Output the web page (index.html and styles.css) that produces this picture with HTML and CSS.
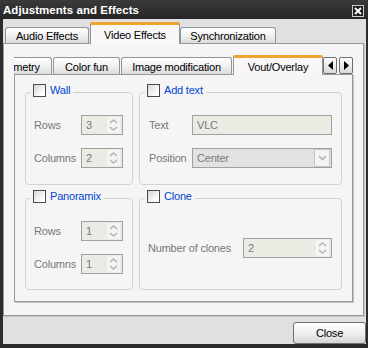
FILE: index.html
```html
<!DOCTYPE html>
<html>
<head>
<meta charset="utf-8">
<link rel="stylesheet" href="styles.css">
</head>
<body>
<div class="window">
  <div class="titlebar">
    <span class="title">Adjustments and Effects</span>
    <span class="xbtn"><svg width="8" height="8" viewBox="0 0 8 8"><path d="M1 1 L7 7 M7 1 L1 7" stroke="#fff" stroke-width="2"/></svg></span>
  </div>
  <div class="client">
    <div class="tabbar outer-bar">
      <div class="tab w-audio">Audio Effects</div>
      <div class="tab active w-video">Video Effects</div>
      <div class="tab w-sync">Synchronization</div>
    </div>
    <div class="pane outer-pane">
      <div class="inner-bar">
        <div class="strip">
          <div class="tab itab w-geo">Geometry</div>
          <div class="tab itab w-color">Color fun</div>
          <div class="tab itab w-image">Image modification</div>
          <div class="tab itab active w-vout">Vout/Overlay</div>
        </div>
        <div class="scrollers">
          <div class="sbtn"><svg width="5" height="9" viewBox="0 0 5 9"><path d="M5 0 L0 4.5 L5 9 Z" fill="#000"/></svg></div>
          <div class="sbtn"><svg width="5" height="9" viewBox="0 0 5 9"><path d="M0 0 L5 4.5 L0 9 Z" fill="#000"/></svg></div>
        </div>
      </div>
      <div class="pane inner-pane">
        <div class="groups">
          <div class="group">
            <div class="gtitle"><span class="cb"></span><span class="gname">Wall</span></div>
            <div class="gbody form narrow">
              <span class="lbl">Rows</span>
              <div class="spin"><span class="val">3</span><span class="arrows"><svg width="9" height="5" viewBox="0 0 9 5"><path d="M1 4 L4.5 1 L8 4" stroke="#b4b4b4" stroke-width="1.5" fill="none"/></svg><svg width="9" height="5" viewBox="0 0 9 5"><path d="M1 1 L4.5 4 L8 1" stroke="#b4b4b4" stroke-width="1.5" fill="none"/></svg></span></div>
              <span class="lbl">Columns</span>
              <div class="spin"><span class="val">2</span><span class="arrows"><svg width="9" height="5" viewBox="0 0 9 5"><path d="M1 4 L4.5 1 L8 4" stroke="#b4b4b4" stroke-width="1.5" fill="none"/></svg><svg width="9" height="5" viewBox="0 0 9 5"><path d="M1 1 L4.5 4 L8 1" stroke="#b4b4b4" stroke-width="1.5" fill="none"/></svg></span></div>
            </div>
          </div>
          <div class="group">
            <div class="gtitle"><span class="cb"></span><span class="gname">Add text</span></div>
            <div class="gbody form wide">
              <span class="lbl">Text</span>
              <div class="field">VLC</div>
              <span class="lbl">Position</span>
              <div class="combo"><span class="val">Center</span><span class="drop"><svg width="9" height="6" viewBox="0 0 9 6"><path d="M1 1 L4.5 4.5 L8 1" stroke="#b4b4b4" stroke-width="1.6" fill="none"/></svg></span></div>
            </div>
          </div>
          <div class="group">
            <div class="gtitle"><span class="cb"></span><span class="gname">Panoramix</span></div>
            <div class="gbody form narrow">
              <span class="lbl">Rows</span>
              <div class="spin"><span class="val">1</span><span class="arrows"><svg width="9" height="5" viewBox="0 0 9 5"><path d="M1 4 L4.5 1 L8 4" stroke="#b4b4b4" stroke-width="1.5" fill="none"/></svg><svg width="9" height="5" viewBox="0 0 9 5"><path d="M1 1 L4.5 4 L8 1" stroke="#b4b4b4" stroke-width="1.5" fill="none"/></svg></span></div>
              <span class="lbl">Columns</span>
              <div class="spin"><span class="val">1</span><span class="arrows"><svg width="9" height="5" viewBox="0 0 9 5"><path d="M1 4 L4.5 1 L8 4" stroke="#b4b4b4" stroke-width="1.5" fill="none"/></svg><svg width="9" height="5" viewBox="0 0 9 5"><path d="M1 1 L4.5 4 L8 1" stroke="#b4b4b4" stroke-width="1.5" fill="none"/></svg></span></div>
            </div>
          </div>
          <div class="group">
            <div class="gtitle"><span class="cb"></span><span class="gname">Clone</span></div>
            <div class="gbody clone">
              <span class="lbl">Number of clones</span>
              <div class="spin"><span class="val">2</span><span class="arrows"><svg width="9" height="5" viewBox="0 0 9 5"><path d="M1 4 L4.5 1 L8 4" stroke="#b4b4b4" stroke-width="1.5" fill="none"/></svg><svg width="9" height="5" viewBox="0 0 9 5"><path d="M1 1 L4.5 4 L8 1" stroke="#b4b4b4" stroke-width="1.5" fill="none"/></svg></span></div>
            </div>
          </div>
        </div>
      </div>
    </div>
    <div class="footer">
      <div class="button">Close</div>
    </div>
  </div>
</div>
</body>
</html>
```
FILE: styles.css
```css
* { box-sizing: border-box; }
html, body { margin: 0; padding: 0; }
body {
  width: 368px;
  height: 348px;
  overflow: hidden;
  font-family: "Liberation Sans", Arial, sans-serif;
  font-size: 11px;
  letter-spacing: -0.2px;
  color: #000;
  background: #2a2a2a;
}
.window {
  width: 368px;
  height: 348px;
  background: #2b2b2b;
  padding: 0 2px 4px 3px;
  display: flex;
  flex-direction: column;
}
.titlebar {
  height: 19px;
  flex: none;
  display: flex;
  align-items: center;
  justify-content: space-between;
  margin-left: -3px;
  margin-right: -2px;
  padding: 0 2px 0 3px;
  background: linear-gradient(#3a3a3a, #262626);
}
.title {
  color: #fff;
  font-weight: bold;
  font-size: 11.5px;
  letter-spacing: 0.05px;
  padding-top: 1px;
}
.xbtn {
  width: 12px;
  height: 12px;
  border: 1px solid #cfcfcf;
  background: #1e1e1e;
  display: flex;
  align-items: center;
  justify-content: center;
  margin-top: 3px;
  margin-right: 2px;
}
.client {
  flex: 1;
  background: #e0e0e0;
  display: flex;
  flex-direction: column;
  padding-top: 3px;
}
.tabbar {
  display: flex;
  align-items: flex-end;
}
.outer-bar {
  height: 21px;
  padding-left: 2px;
}
.tab {
  height: 16px;
  border: 1px solid #8f9699;
  border-bottom: none;
  border-radius: 3px 3px 0 0;
  background: linear-gradient(#ffffff, #f3f3f3 45%, #dcdcdc);
  display: flex;
  align-items: center;
  justify-content: center;
  white-space: nowrap;
  flex: none;
  padding-top: 1px;
}
.tab.active {
  height: 22px;
  margin-bottom: -1px;
  position: relative;
  z-index: 1;
  background: #f7f7f7;
  border-top: 3px solid #f1a330;
  border-radius: 2px 2px 0 0;
  padding-top: 0;
}
.w-audio { width: 84px; }
.w-video { width: 90px; margin-left: 1px; }
.w-sync { width: 96px; }
.pane {
  border: 1px solid #929a9d;
  background: #f5f5f5;
}
.outer-pane {
  height: 273px;
  margin-right: 2px;
  padding: 11px 10px 13px 10px;
  display: flex;
  flex-direction: column;
  box-shadow: 1px 1px 0 #c4c4c4;
}
.inner-bar {
  height: 19px;
  display: flex;
  align-items: flex-end;
  flex: none;
}
.strip {
  flex: 1;
  overflow: hidden;
  display: flex;
  align-items: flex-end;
  height: 20px;
  margin-bottom: -1px;
}
.itab {
  height: 17px;
  margin-bottom: 1px;
}
.itab.active {
  height: 20px;
  margin-bottom: 0;
}
.w-geo { width: 71px; margin-left: -33px; }
.w-color { width: 67px; margin-left: 1px; }
.w-image { width: 111px; margin-left: 1px; }
.w-vout { width: 90px; margin-left: 1px; }
.scrollers {
  display: flex;
  gap: 2px;
  align-self: flex-start;
  margin-top: 2px;
}
.sbtn {
  width: 14px;
  height: 17px;
  border: 1px solid #6e6e6e;
  border-radius: 2px;
  background: linear-gradient(#ffffff, #d9d9d9);
  display: flex;
  align-items: center;
  justify-content: center;
}
.inner-pane {
  flex: 1;
  padding: 17px 10px 11px 10px;
  box-shadow: 1px 1px 0 #c4c4c4;
}
.groups {
  display: grid;
  grid-template-columns: 108px 203px;
  grid-template-rows: 93px 92px;
  column-gap: 6px;
  row-gap: 13px;
}
.group {
  border: 1px solid #d3d3ca;
  border-radius: 4px;
  display: flex;
  flex-direction: column;
}
.gtitle {
  margin-top: -9px;
  margin-left: 5px;
  height: 16px;
  padding: 0 3px 0 2px;
  background: #f5f5f5;
  align-self: flex-start;
  display: flex;
  align-items: flex-start;
}
.cb {
  width: 13px;
  height: 13px;
  border: 1px solid #4a4a4a;
  background: linear-gradient(135deg, #d6d6d6, #ffffff 80%);
  margin-right: 4px;
}
.gname {
  color: #0046d5;
  line-height: 13px;
}
.lbl {
  color: #787878;
  white-space: nowrap;
}
.form {
  display: grid;
  row-gap: 13px;
  grid-auto-rows: 20px;
  align-items: center;
  padding-top: 15px;
}
.narrow {
  grid-template-columns: 47px 42px;
  padding-left: 8px;
}
.wide {
  grid-template-columns: 43px 140px;
  padding-left: 9px;
}
.spin, .field, .combo {
  height: 20px;
  border: 1px solid #a0a0a0;
  background: #ebeae3;
  display: flex;
  align-items: center;
  color: #7a7a7a;
}
.val, .field {
  padding-left: 4px;
}
.spin .val, .combo .val { flex: 1; }
.arrows {
  width: 13px;
  height: 16px;
  margin-right: 2px;
  background: #f4f4f2;
  display: flex;
  flex-direction: column;
  align-items: center;
  justify-content: space-around;
  padding: 1px 0;
}
.combo {
  background: #e2e2e2;
}
.drop {
  width: 16px;
  height: 18px;
  border: 1px solid #c4c4c4;
  background: #f4f4f4;
  display: flex;
  align-items: center;
  justify-content: center;
  margin-right: 1px;
}
.clone {
  flex: 1;
  display: flex;
  align-items: center;
  padding-left: 8px;
}
.clone .lbl { width: 95px; }
.clone .spin { width: 89px; }
.footer {
  flex: 1;
  display: flex;
  justify-content: flex-end;
  align-items: flex-end;
}
.button {
  width: 73px;
  height: 22px;
  border: 1px solid #6f6f6f;
  border-radius: 3px;
  background: linear-gradient(#ffffff, #f0f0f0 50%, #d6d6d6);
  display: flex;
  align-items: center;
  justify-content: center;
}
```
